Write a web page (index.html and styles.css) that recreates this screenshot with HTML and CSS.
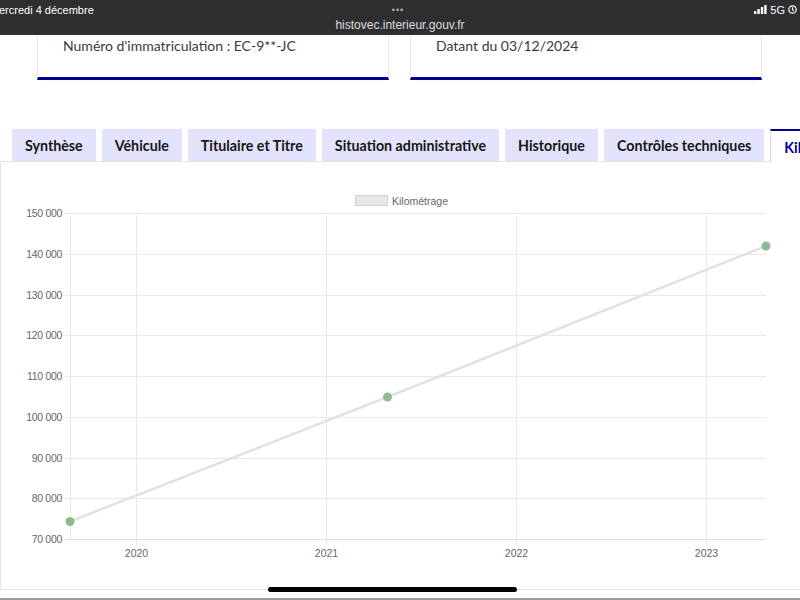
FILE: index.html
```html
<!DOCTYPE html>
<html lang="fr">
<head>
<meta charset="utf-8">
<title>HistoVec</title>
<link rel="stylesheet" href="styles.css">
</head>
<body>
<div class="screen">
  <header class="statusbar">
    <div class="status-row">
      <span class="status-date">ercredi 4 décembre</span>
      <span class="status-dots">•••</span>
      <span class="status-right">
        <svg class="signal" width="13" height="9" viewBox="0 0 13 9"><rect x="0" y="6" width="2.4" height="3" rx="0.5"/><rect x="3.4" y="4" width="2.4" height="5" rx="0.5"/><rect x="6.8" y="2" width="2.4" height="7" rx="0.5"/><rect x="10.2" y="0" width="2.4" height="9" rx="0.5"/></svg>
        <span class="net">5G</span>
        <svg class="lock" width="9" height="9" viewBox="0 0 9 9"><circle cx="4.5" cy="4.5" r="3.7" fill="none" stroke="#fff" stroke-width="1.2"/><path d="M4.5 2.3v2.4l1.4 1" fill="none" stroke="#fff" stroke-width="1.1"/></svg>
      </span>
    </div>
    <div class="status-url">histovec.interieur.gouv.fr</div>
  </header>

  <section class="cards">
    <div class="card"><p>Numéro d'immatriculation : EC-9**-JC</p></div>
    <div class="card"><p>Datant du 03/12/2024</p></div>
  </section>

  <nav class="tabs">
    <div class="tab">Synthèse</div>
    <div class="tab">Véhicule</div>
    <div class="tab">Titulaire et Titre</div>
    <div class="tab">Situation administrative</div>
    <div class="tab">Historique</div>
    <div class="tab">Contrôles techniques</div>
    <div class="tab active">Kilométrage</div>
  </nav>

  <section class="panel">
    <svg class="chart" width="800" height="428" viewBox="0 161 800 428">
      <g class="legend">
        <rect x="355.5" y="195.5" width="32" height="10" fill="#e6e6e6" stroke="#d2d2d2"/>
        <text x="392" y="204.5">Kilométrage</text>
      </g>
      <g class="grid" stroke="#e9e9e9" stroke-width="1">
        <line x1="64" y1="213.5" x2="766" y2="213.5"/>
        <line x1="64" y1="254.5" x2="766" y2="254.5"/>
        <line x1="64" y1="295.5" x2="766" y2="295.5"/>
        <line x1="64" y1="335.5" x2="766" y2="335.5"/>
        <line x1="64" y1="376.5" x2="766" y2="376.5"/>
        <line x1="64" y1="417.5" x2="766" y2="417.5"/>
        <line x1="64" y1="458.5" x2="766" y2="458.5"/>
        <line x1="64" y1="498.5" x2="766" y2="498.5"/>
        <line x1="70.5" y1="213" x2="70.5" y2="539"/>
        <line x1="136.5" y1="213" x2="136.5" y2="545"/>
        <line x1="326.5" y1="213" x2="326.5" y2="545"/>
        <line x1="516.5" y1="213" x2="516.5" y2="545"/>
        <line x1="706.5" y1="213" x2="706.5" y2="545"/>
      </g>
      <line x1="64" y1="539.5" x2="766" y2="539.5" stroke="#dcdcdc" stroke-width="1.2"/>
      <g class="ylabels">
        <text x="62" y="217">150 000</text>
        <text x="62" y="258">140 000</text>
        <text x="62" y="299">130 000</text>
        <text x="62" y="339">120 000</text>
        <text x="62" y="380">110 000</text>
        <text x="62" y="421">100 000</text>
        <text x="62" y="462">90 000</text>
        <text x="62" y="502">80 000</text>
        <text x="62" y="543">70 000</text>
      </g>
      <g class="xlabels">
        <text x="136.5" y="557">2020</text>
        <text x="326.5" y="557">2021</text>
        <text x="516.5" y="557">2022</text>
        <text x="706.5" y="557">2023</text>
      </g>
      <polyline points="70,521.5 387.5,397 766,246" fill="none" stroke="#e2e2e2" stroke-width="2.5"/>
      <g fill="#8fbc8f">
        <circle cx="70" cy="521.5" r="4.5"/>
        <circle cx="387.5" cy="397" r="4.5"/>
        <circle cx="766" cy="246" r="4.5"/>
      </g>
    </svg>
  </section>
  <div class="bottom-strip"></div>
  <div class="home-indicator"></div>
</div>
</body>
</html>
```

FILE: styles.css
```css
* { box-sizing: border-box; }
html, body { margin: 0; padding: 0; background: #fff; }
body { font-family: Lato, "Noto Sans", "Liberation Sans", sans-serif; }

.screen {
  position: relative;
  width: 800px;
  height: 600px;
  overflow: hidden;
  display: flex;
  flex-direction: column;
}

.statusbar {
  height: 35px;
  background: #2f2f31;
  color: #fff;
  font-family: "Liberation Sans", Arial, sans-serif;
  flex-shrink: 0;
}
.status-row {
  height: 19px;
  display: flex;
  align-items: center;
  justify-content: space-between;
  font-size: 11px;
  padding-right: 3px;
}
.status-date { width: 120px; margin-left: -1px; }
.status-dots { color: #b4b4b4; font-size: 9px; letter-spacing: 1px; }
.status-right {
  width: 120px;
  display: flex;
  justify-content: flex-end;
  align-items: center;
  gap: 3px;
}
.signal { fill: #fff; }
.net { font-size: 11px; }
.status-url {
  text-align: center;
  font-size: 12px;
  color: #dedede;
  line-height: 12px;
}

.cards {
  display: grid;
  grid-template-columns: 352px 352px;
  column-gap: 21px;
  padding-left: 37px;
  height: 45px;
  flex-shrink: 0;
}
.card {
  border-left: 1px solid #e6e6e6;
  border-right: 1px solid #e6e6e6;
  border-bottom: 3px solid #000091;
  padding: 0 0 0 25px;
  box-shadow: 0 6px 8px -6px rgba(0,0,0,0.06);
}
.card p {
  margin: 0;
  padding-top: 1px;
  font-size: 14px;
  line-height: 20px;
  color: #3a3a3a;
}

.tabs {
  margin-top: 49px;
  display: flex;
  gap: 6px;
  padding-left: 12px;
  height: 32px;
  flex-shrink: 0;
  position: relative;
  z-index: 1;
}
.tab {
  flex-shrink: 0;
  background: #e3e3fd;
  color: #161616;
  font-weight: 700;
  font-size: 14.25px;
  display: flex;
  align-items: center;
  padding: 0 13px;
  white-space: nowrap;
}
.tab.active {
  background: #fff;
  color: #000091;
  border-top: 2px solid #000091;
  border-left: 1px solid #dcdcdc;
  border-right: 1px solid #dcdcdc;
  height: 33px;
  padding-top: 1px;
}

.panel {
  height: 429px;
  border: 1px solid #e2e2e2;
  border-right: none;
  flex-shrink: 0;
}
.chart { display: block; margin-top: -1px; margin-left: -1px; }
.chart text { font-family: "Liberation Sans", Arial, sans-serif; fill: #666; }
.legend text { font-size: 10.5px; }
.ylabels text { font-size: 10.5px; text-anchor: end; letter-spacing: -0.3px; }
.xlabels text { font-size: 10.5px; text-anchor: middle; }

.bottom-strip {
  margin-top: auto;
  height: 2px;
  background: #9a9a9a;
}
.home-indicator {
  position: absolute;
  left: 268px;
  top: 587px;
  width: 249px;
  height: 5px;
  border-radius: 3px;
  background: #000;
}
```
